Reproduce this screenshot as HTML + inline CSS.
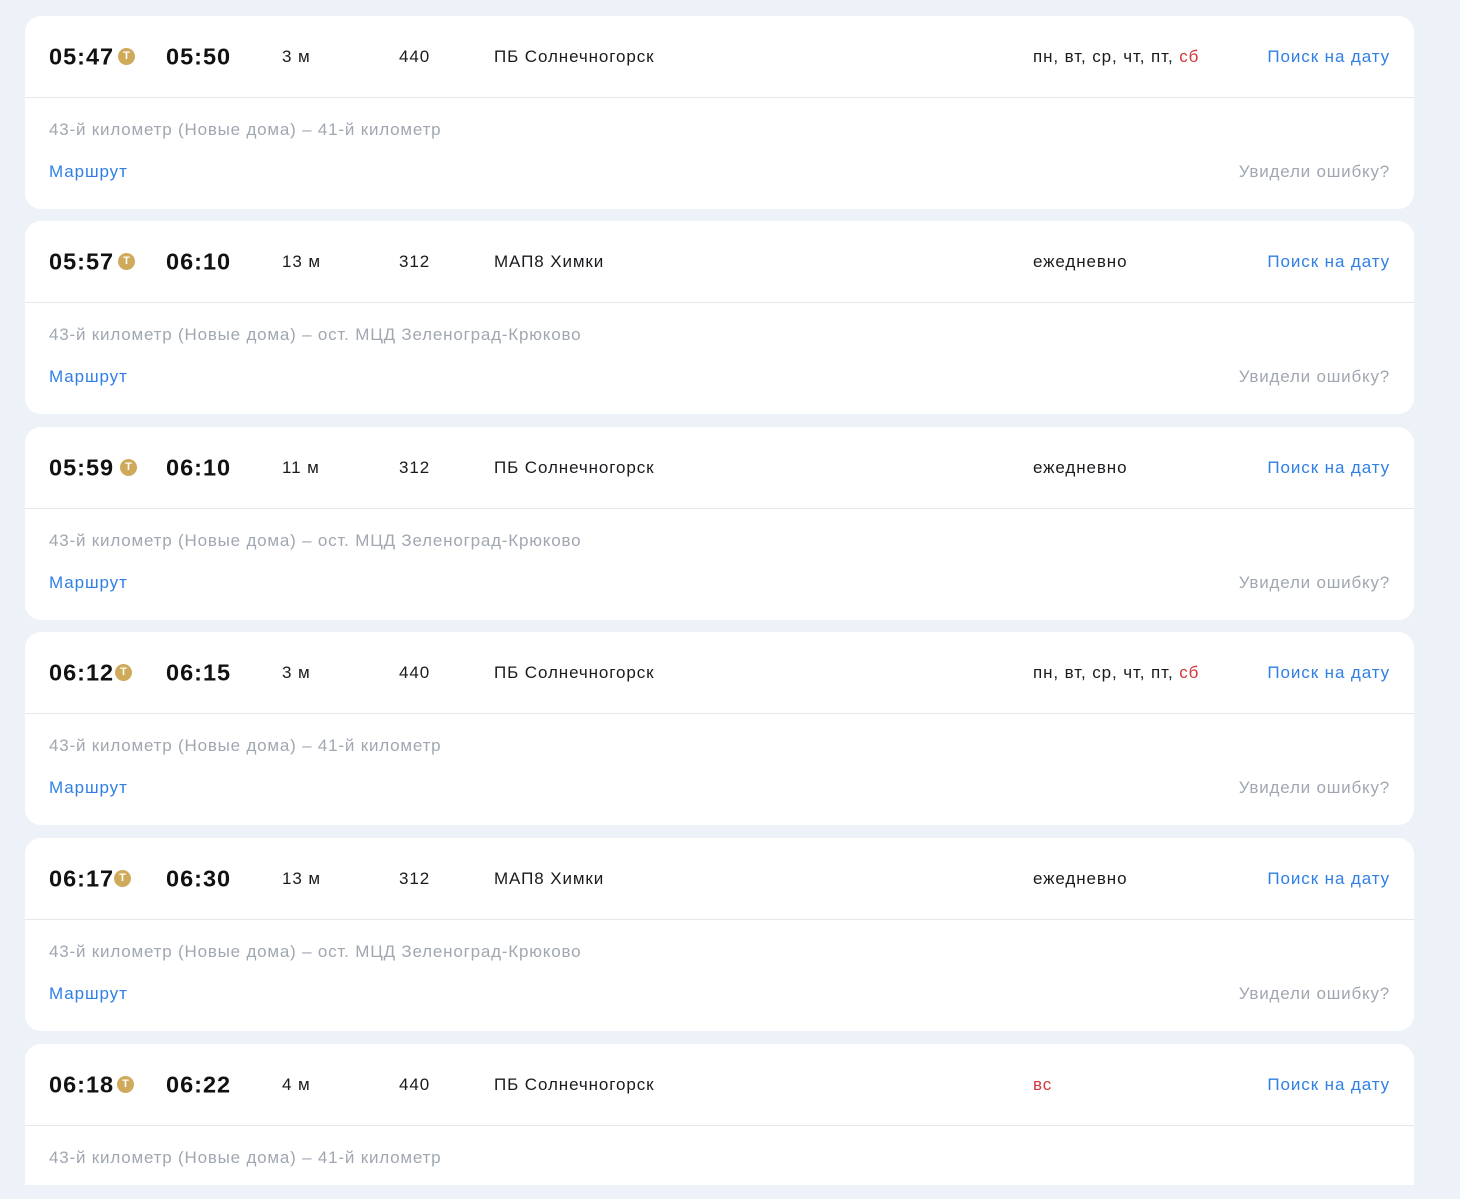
<!DOCTYPE html>
<html><head><meta charset="utf-8">
<style>
*{margin:0;padding:0;box-sizing:border-box}
html,body{width:1460px;height:1199px;overflow:hidden;background:#edf2f8;font-family:"Liberation Sans","DejaVu Sans",sans-serif}
.card{position:absolute;left:25px;width:1389px;height:193px;background:#fff;border-radius:16px}
.card.last{height:141px;border-radius:16px 16px 0 0}
.hd{position:absolute;left:0;top:0;width:100%;height:82px;border-bottom:1.5px solid #e6e8ec}
.t{position:absolute;top:41px;transform:translateY(-50%);white-space:nowrap;font-size:17px;color:#1b1b1f;letter-spacing:0.9px}
.tm{font-size:23.5px;font-weight:bold;color:#111;letter-spacing:1px}
.badge{position:absolute;top:32px;width:17px;height:17px;border-radius:50%;background:#cfaa5a;color:#fff;font-size:11px;font-weight:bold;text-align:center;line-height:17px}
.blue{color:#2f7fe6}
.red{color:#d4353b}
.grey{color:#a0a7b1;letter-spacing:0.8px}
.r2{top:114px}
.r3{top:156px}
</style></head><body>
<div class="card" style="top:-200px"></div>

<div class="card" style="top:16px">
<div class="hd"></div>
<div class="t tm" style="left:24px">05:47</div><div class="badge" style="left:93px">T</div>
<div class="t tm" style="left:141px">05:50</div>
<div class="t" style="left:257px">3 м</div>
<div class="t" style="left:374px">440</div>
<div class="t" style="left:469px">ПБ Солнечногорск</div>
<div class="t" style="left:1008px">пн, вт, ср, чт, пт, <span class="red">сб</span></div>
<div class="t blue" style="right:24px">Поиск на дату</div>
<div class="t grey r2" style="left:24px">43-й километр (Новые дома) – 41-й километр</div>
<div class="t blue r3" style="left:24px">Маршрут</div>
<div class="t grey r3" style="right:24px">Увидели ошибку?</div>
</div>

<div class="card" style="top:221px">
<div class="hd"></div>
<div class="t tm" style="left:24px">05:57</div><div class="badge" style="left:93px">T</div>
<div class="t tm" style="left:141px">06:10</div>
<div class="t" style="left:257px">13 м</div>
<div class="t" style="left:374px">312</div>
<div class="t" style="left:469px">МАП8 Химки</div>
<div class="t" style="left:1008px">ежедневно</div>
<div class="t blue" style="right:24px">Поиск на дату</div>
<div class="t grey r2" style="left:24px">43-й километр (Новые дома) – ост. МЦД Зеленоград-Крюково</div>
<div class="t blue r3" style="left:24px">Маршрут</div>
<div class="t grey r3" style="right:24px">Увидели ошибку?</div>
</div>

<div class="card" style="top:427px">
<div class="hd"></div>
<div class="t tm" style="left:24px">05:59</div><div class="badge" style="left:95px">T</div>
<div class="t tm" style="left:141px">06:10</div>
<div class="t" style="left:257px">11 м</div>
<div class="t" style="left:374px">312</div>
<div class="t" style="left:469px">ПБ Солнечногорск</div>
<div class="t" style="left:1008px">ежедневно</div>
<div class="t blue" style="right:24px">Поиск на дату</div>
<div class="t grey r2" style="left:24px">43-й километр (Новые дома) – ост. МЦД Зеленоград-Крюково</div>
<div class="t blue r3" style="left:24px">Маршрут</div>
<div class="t grey r3" style="right:24px">Увидели ошибку?</div>
</div>

<div class="card" style="top:632px">
<div class="hd"></div>
<div class="t tm" style="left:24px">06:12</div><div class="badge" style="left:90px">T</div>
<div class="t tm" style="left:141px">06:15</div>
<div class="t" style="left:257px">3 м</div>
<div class="t" style="left:374px">440</div>
<div class="t" style="left:469px">ПБ Солнечногорск</div>
<div class="t" style="left:1008px">пн, вт, ср, чт, пт, <span class="red">сб</span></div>
<div class="t blue" style="right:24px">Поиск на дату</div>
<div class="t grey r2" style="left:24px">43-й километр (Новые дома) – 41-й километр</div>
<div class="t blue r3" style="left:24px">Маршрут</div>
<div class="t grey r3" style="right:24px">Увидели ошибку?</div>
</div>

<div class="card" style="top:838px">
<div class="hd"></div>
<div class="t tm" style="left:24px">06:17</div><div class="badge" style="left:89px">T</div>
<div class="t tm" style="left:141px">06:30</div>
<div class="t" style="left:257px">13 м</div>
<div class="t" style="left:374px">312</div>
<div class="t" style="left:469px">МАП8 Химки</div>
<div class="t" style="left:1008px">ежедневно</div>
<div class="t blue" style="right:24px">Поиск на дату</div>
<div class="t grey r2" style="left:24px">43-й километр (Новые дома) – ост. МЦД Зеленоград-Крюково</div>
<div class="t blue r3" style="left:24px">Маршрут</div>
<div class="t grey r3" style="right:24px">Увидели ошибку?</div>
</div>

<div class="card last" style="top:1044px">
<div class="hd"></div>
<div class="t tm" style="left:24px">06:18</div><div class="badge" style="left:92px">T</div>
<div class="t tm" style="left:141px">06:22</div>
<div class="t" style="left:257px">4 м</div>
<div class="t" style="left:374px">440</div>
<div class="t" style="left:469px">ПБ Солнечногорск</div>
<div class="t red" style="left:1008px">вс</div>
<div class="t blue" style="right:24px">Поиск на дату</div>
<div class="t grey r2" style="left:24px">43-й километр (Новые дома) – 41-й километр</div>
</div>
</body></html>
